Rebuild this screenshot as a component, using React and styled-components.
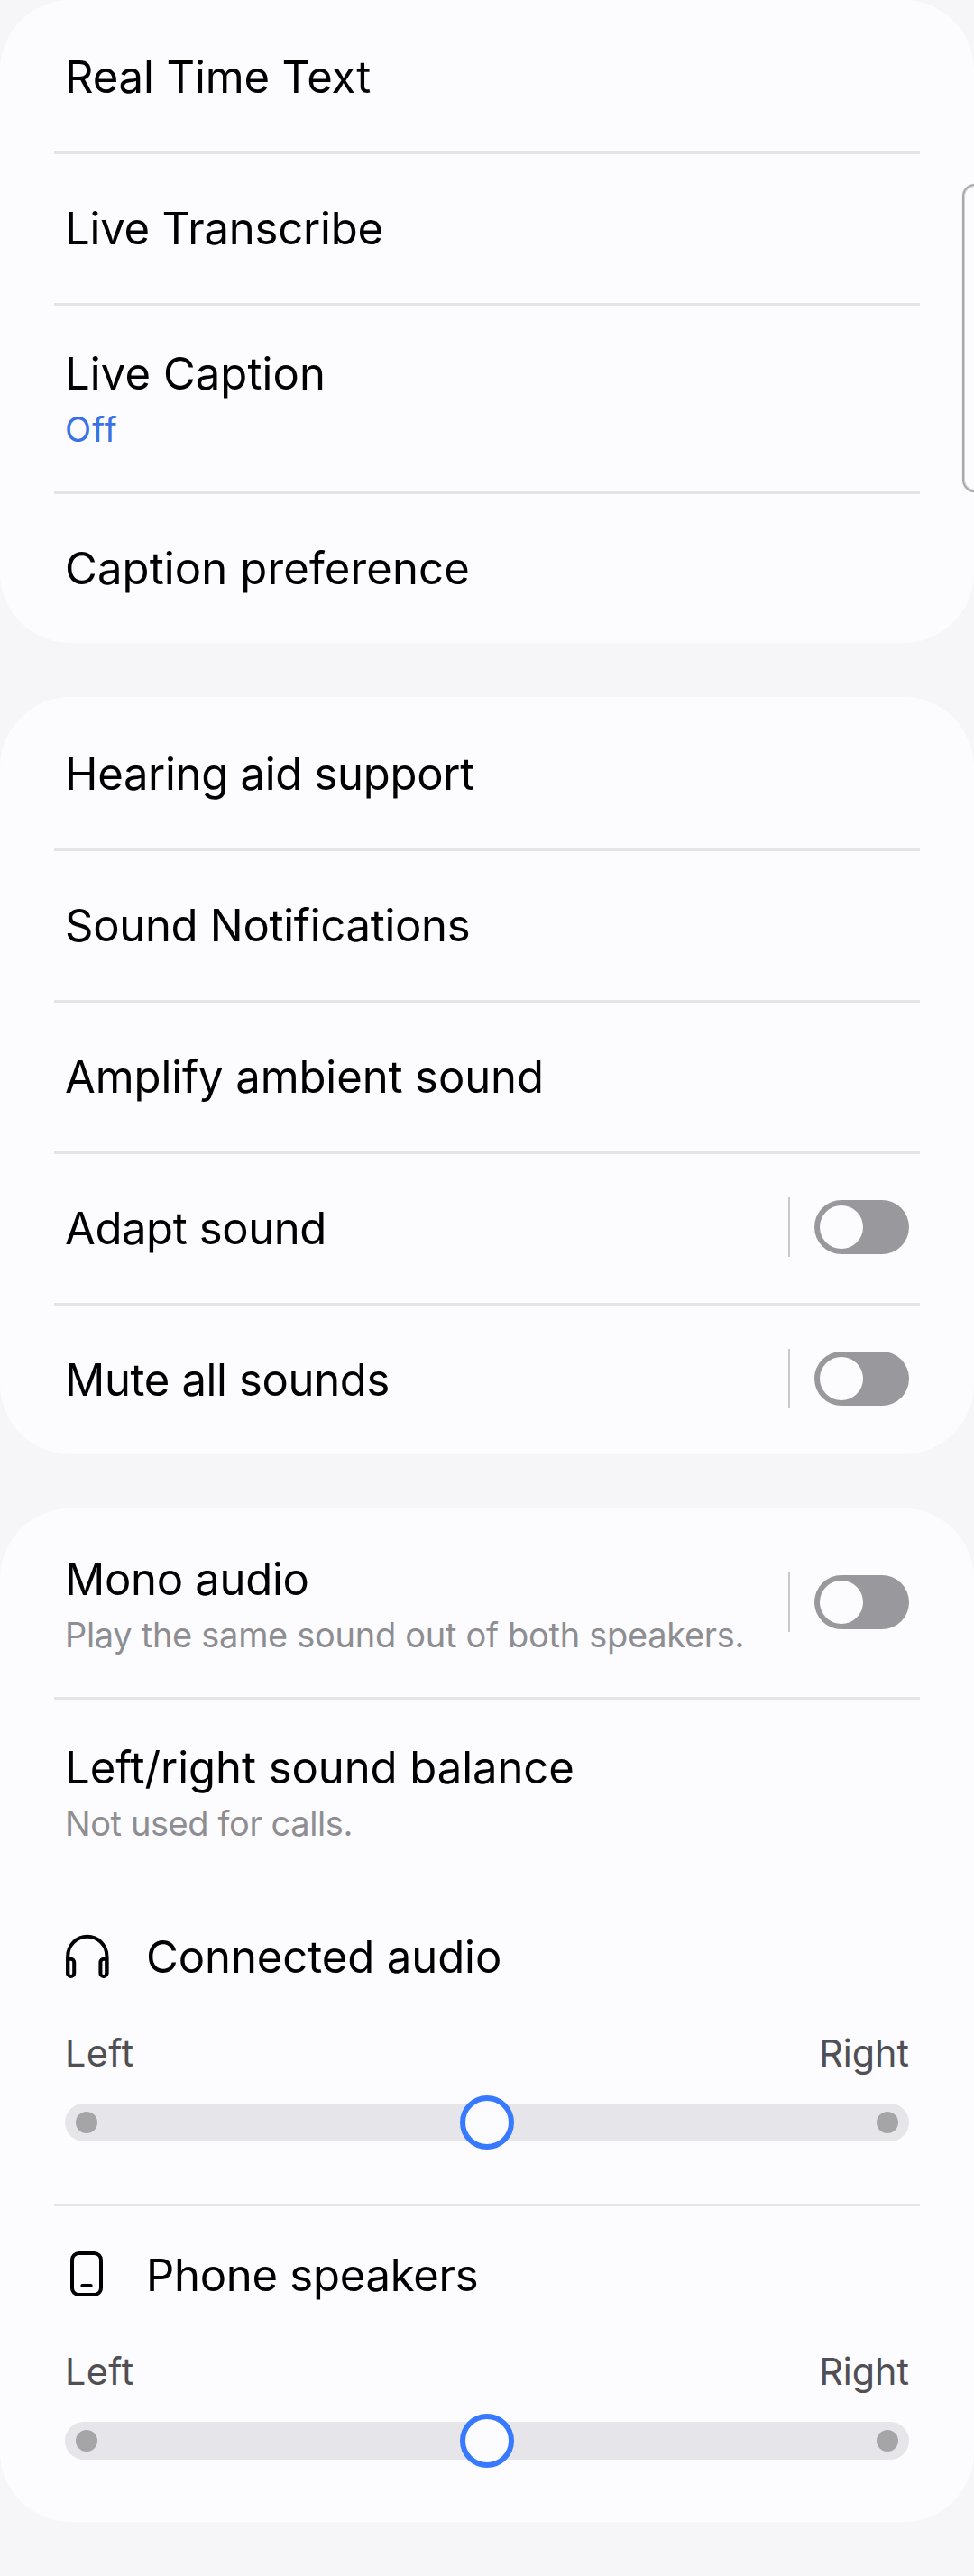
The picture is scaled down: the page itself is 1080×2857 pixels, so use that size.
import React from 'react';
import styled, { createGlobalStyle, css } from 'styled-components';

const GlobalStyle = createGlobalStyle`
  *, *::before, *::after { box-sizing: border-box; }
  body {
    margin: 0;
    background: #f6f6f8;
    font-family: Inter, Roboto, sans-serif;
    color: #000;
  }
`;

const Page = styled.main`
  position: relative;
  width: 1080px;
  min-height: 2857px;
  display: flex;
  flex-direction: column;
  gap: 60px;
  overflow: hidden;
`;

const Card = styled.section`
  background: #fcfcff;
  border-radius: 78px;
  overflow: hidden;
`;

const divider = css`
  background: linear-gradient(#e4e4e6, #e4e4e6) 60px 0 / 960px 3px no-repeat;
`;

const Row = styled.div`
  display: flex;
  align-items: center;
  height: ${(p) => (p.$tall ? 209 : 168)}px;
  padding: 0 72px;
  ${(p) => p.$divided && divider}
`;

const RowText = styled.div`
  flex: 1;
  align-self: flex-start;
  padding-top: ${(p) => (p.$tall ? 49 : 56)}px;
`;

const Title = styled.div`
  font-size: 49px;
  line-height: 60px;
  letter-spacing: ${(p) => p.$track || 0}px;
  white-space: nowrap;
`;

const Summary = styled.div`
  margin-top: 8px;
  font-size: 38px;
  line-height: 46px;
  letter-spacing: ${(p) => p.$track || 0}px;
  color: ${(p) => (p.$accent ? '#3a72e6' : '#8e8e92')};
  white-space: nowrap;
`;

const SwitchArea = styled.div`
  display: flex;
  align-items: center;
  gap: 27px;
  height: 66px;
  margin-bottom: ${(p) => (p.$tall ? 1 : 0)}px;
`;

const Separator = styled.span`
  width: 2px;
  height: 66px;
  background: #c9c9cb;
`;

const Switch = styled.button`
  display: flex;
  width: 105px;
  height: 60px;
  padding: 6px;
  border: 0;
  border-radius: 30px;
  background: #99989d;
`;

const Knob = styled.span`
  width: 48px;
  height: 48px;
  border-radius: 50%;
  background: #fcfcff;
`;

const Balance = styled.div`
  height: 353px;
  padding: 49px 72px 60px;
  ${(p) => p.$divided && divider}
`;

const BalanceHeader = styled.div`
  display: flex;
  gap: 42px;
  height: 60px;
`;

const HeaderText = styled.div`
  padding-top: 1px;
`;

const Icon = styled.svg`
  width: 48px;
  height: 60px;
  overflow: visible;
  fill: none;
  stroke: #000;
  stroke-width: 4;
  stroke-linecap: round;
`;

const Labels = styled.div`
  display: flex;
  justify-content: space-between;
  margin-top: 52px;
  font-size: 41.25px;
  line-height: 50px;
  color: #505054;
`;

const Label = styled.span`
  letter-spacing: ${(p) => p.$track || 0}px;
`;

const Slider = styled.div`
  display: grid;
  align-items: center;
  height: 60px;
  margin-top: 22px;
  & > * { grid-area: 1 / 1; }
`;

const Track = styled.div`
  display: flex;
  align-items: center;
  justify-content: space-between;
  height: 42px;
  padding: 0 12px;
  border-radius: 21px;
  background: #e5e5ea;
`;

const Dot = styled.span`
  width: 24px;
  height: 24px;
  border-radius: 50%;
  background: #a5a5a7;
`;

const Thumb = styled.span`
  justify-self: center;
  width: 60px;
  height: 60px;
  border: 6px solid #387aff;
  border-radius: 50%;
  background: #fcfcff;
`;

const EdgeHandle = styled.div`
  position: absolute;
  top: 204px;
  left: 1067px;
  width: 40px;
  height: 342px;
  border: 2px solid #a8a8aa;
  border-radius: 14px;
  box-shadow: 0 0 1px #b0b0b2, inset 0 0 0 1px #d2d2d4;
`;

function SettingRow({ title, track, summary, summaryTrack, accent, toggle, divided }) {
  const tall = Boolean(summary);
  return (
    <Row $tall={tall} $divided={divided}>
      <RowText $tall={tall}>
        <Title $track={track}>{title}</Title>
        {summary && <Summary $accent={accent} $track={summaryTrack}>{summary}</Summary>}
      </RowText>
      {toggle && (
        <SwitchArea $tall={tall}>
          <Separator />
          <Switch role="switch" aria-checked="false" aria-label={title}><Knob /></Switch>
        </SwitchArea>
      )}
    </Row>
  );
}

function HeadphonesIcon() {
  return (
    <Icon viewBox="0 0 48 60">
      <path d="M3.2 49V29.4a21.6 21.6 0 0 1 43.2 0V49" />
      <path d="M3.2 32.8H6.7a3.5 3.5 0 0 1 3.5 3.5V48.4a3.5 3.5 0 0 1-7 0Z" />
      <path d="M46.4 32.8H42.9a3.5 3.5 0 0 0-3.5 3.5V48.4a3.5 3.5 0 0 0 7 0Z" />
    </Icon>
  );
}

function PhoneIcon() {
  return (
    <Icon viewBox="0 0 48 60">
      <rect x="8" y="6" width="32" height="46" rx="7.5" />
      <path d="M19.3 42H28.7" />
    </Icon>
  );
}

function BalanceControl({ icon, title, track, divided }) {
  return (
    <Balance $divided={divided}>
      <BalanceHeader>
        {icon}
        <HeaderText>
          <Title $track={track}>{title}</Title>
        </HeaderText>
      </BalanceHeader>
      <Labels>
        <Label $track={0.5}>Left</Label>
        <Label>Right</Label>
      </Labels>
      <Slider>
        <Track><Dot /><Dot /></Track>
        <Thumb />
      </Slider>
    </Balance>
  );
}

export default function App() {
  return (
    <>
      <GlobalStyle />
      <Page>
        <Card>
          <SettingRow title="Real Time Text" track={-0.12} />
          <SettingRow title="Live Transcribe" track={-0.19} divided />
          <SettingRow title="Live Caption" track={0.08} summary="Off" summaryTrack={1.1} accent divided />
          <SettingRow title="Caption preference" track={0.13} divided />
        </Card>
        <Card>
          <SettingRow title="Hearing aid support" track={-0.29} />
          <SettingRow title="Sound Notifications" track={-0.29} divided />
          <SettingRow title="Amplify ambient sound" track={-0.09} divided />
          <SettingRow title="Adapt sound" track={-0.4} toggle divided />
          <SettingRow title="Mute all sounds" track={-0.35} toggle divided />
        </Card>
        <Card>
          <SettingRow
            title="Mono audio"
            track={-0.28}
            summary="Play the same sound out of both speakers."
            summaryTrack={-0.3}
            toggle
          />
          <SettingRow
            title="Left/right sound balance"
            track={-0.06}
            summary="Not used for calls."
            summaryTrack={-0.41}
            divided
          />
          <BalanceControl icon={<HeadphonesIcon />} title="Connected audio" track={-0.07} />
          <BalanceControl icon={<PhoneIcon />} title="Phone speakers" track={-0.27} divided />
        </Card>
        <EdgeHandle />
      </Page>
    </>
  );
}
